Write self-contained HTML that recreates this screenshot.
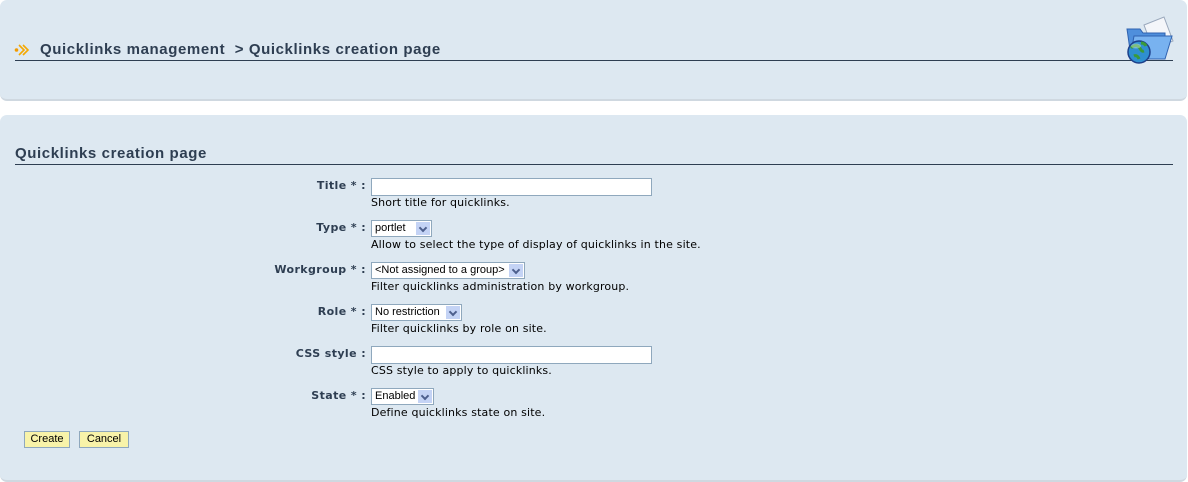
<!DOCTYPE html>
<html><head><meta charset="utf-8"><style>
body{margin:0;width:1188px;height:482px;background:#fff;position:relative;font-family:"DejaVu Sans",Verdana,sans-serif;color:#2e3e52;overflow:hidden}
.panel{position:absolute;left:0;width:1187px;background:#dde8f1;border-radius:7px;border-bottom:2px solid #cfd8e0}
h1{position:absolute;margin:0;font-size:15px;font-weight:bold;color:#2e3e52;letter-spacing:0.6px;font-family:"Liberation Sans",Arial,sans-serif}
.line{position:absolute;left:15px;width:1158px;height:1px;background:#2e3e52}
.lbl{position:absolute;right:822px;font-size:11px;font-weight:bold;color:#2e3e52;white-space:nowrap;letter-spacing:0.4px}
.help{position:absolute;left:371px;font-size:11px;letter-spacing:0.15px;color:#000;white-space:nowrap}
.inp{position:absolute;left:371px;height:16px;background:#fff;border:1px solid #8fa8bd;box-sizing:border-box}
.sel{position:absolute;left:371px;height:17px;background:#fff;border:1px solid #8fa8bd;box-sizing:border-box;font-family:"Liberation Sans",Arial,sans-serif;font-size:11px;color:#000;line-height:15px;padding-left:3px}
.sel i{position:absolute;right:1px;top:1px;width:14px;height:13px;background:#c4d3f5}
.sel i:after{content:"";position:absolute;left:4px;top:3px;width:4px;height:4px;border-right:2px solid #4d5f8d;border-bottom:2px solid #4d5f8d;transform:rotate(45deg)}
.btn{position:absolute;top:431px;height:17px;background:#f8f3a9;border:1px solid #8fa8bd;box-sizing:border-box;font-family:"Liberation Sans",Arial,sans-serif;font-size:11px;color:#000;text-align:center;line-height:15px}
</style></head><body>
<div class="panel" style="top:0;height:99px"></div>
<div class="panel" style="top:115px;height:365px"></div>
<svg style="position:absolute;left:14px;top:44px" width="16" height="12" viewBox="0 0 16 12"><circle cx="2.5" cy="6" r="1.8" fill="#f29b00"/><path d="M5 1l5 5-5 5M9 1l5 5-5 5" fill="none" stroke="#f5a800" stroke-width="1.6"/></svg>
<h1 style="left:40px;top:41px">Quicklinks management &nbsp;&gt; Quicklinks creation page</h1>
<div class="line" style="top:60px"></div>
<svg style="position:absolute;left:1124px;top:15px" width="52" height="50" viewBox="0 0 52 50"><path d="M20 10l20-8 9 24-20 8z" fill="#f4f6fa" stroke="#9aa8bc"/><path d="M3 14h13l3 4h22v24H7z" fill="#4f8fdc" stroke="#2f62b0"/><path d="M10 21h38l-7 23H6z" fill="#78b2f0" stroke="#2f62b0"/><circle cx="15" cy="37" r="11" fill="#2f8fd0" stroke="#1d3f8a" stroke-width="1.5"/><path d="M7 33c3-3 6-3 8-1s2 5 5 4M10 41c2-1 4 0 5 3M17 28c2 0 4 1 5 3" stroke="#3a9a3a" stroke-width="3" fill="none"/><ellipse cx="12" cy="31" rx="5" ry="2.5" fill="#fff" opacity=".35"/></svg>
<h1 style="left:15px;top:145px">Quicklinks creation page</h1>
<div class="line" style="top:164px"></div>

<div class="lbl" style="top:179px">Title * :</div>
<div class="inp" style="top:178px;width:281px;height:18px"></div>
<div class="help" style="top:196px">Short title for quicklinks.</div>

<div class="lbl" style="top:221px">Type * :</div>
<div class="sel" style="top:220px;width:61px">portlet<i></i></div>
<div class="help" style="top:238px">Allow to select the type of display of quicklinks in the site.</div>

<div class="lbl" style="top:263px">Workgroup * :</div>
<div class="sel" style="top:262px;width:154px">&lt;Not assigned to a group&gt;<i></i></div>
<div class="help" style="top:280px">Filter quicklinks administration by workgroup.</div>

<div class="lbl" style="top:305px">Role * :</div>
<div class="sel" style="top:304px;width:91px">No restriction<i></i></div>
<div class="help" style="top:322px">Filter quicklinks by role on site.</div>

<div class="lbl" style="top:347px">CSS style :</div>
<div class="inp" style="top:346px;width:281px;height:18px"></div>
<div class="help" style="top:364px">CSS style to apply to quicklinks.</div>

<div class="lbl" style="top:389px">State * :</div>
<div class="sel" style="top:388px;width:63px">Enabled<i></i></div>
<div class="help" style="top:406px">Define quicklinks state on site.</div>

<div class="btn" style="left:24px;width:46px">Create</div>
<div class="btn" style="left:79px;width:50px">Cancel</div>
</body></html>
